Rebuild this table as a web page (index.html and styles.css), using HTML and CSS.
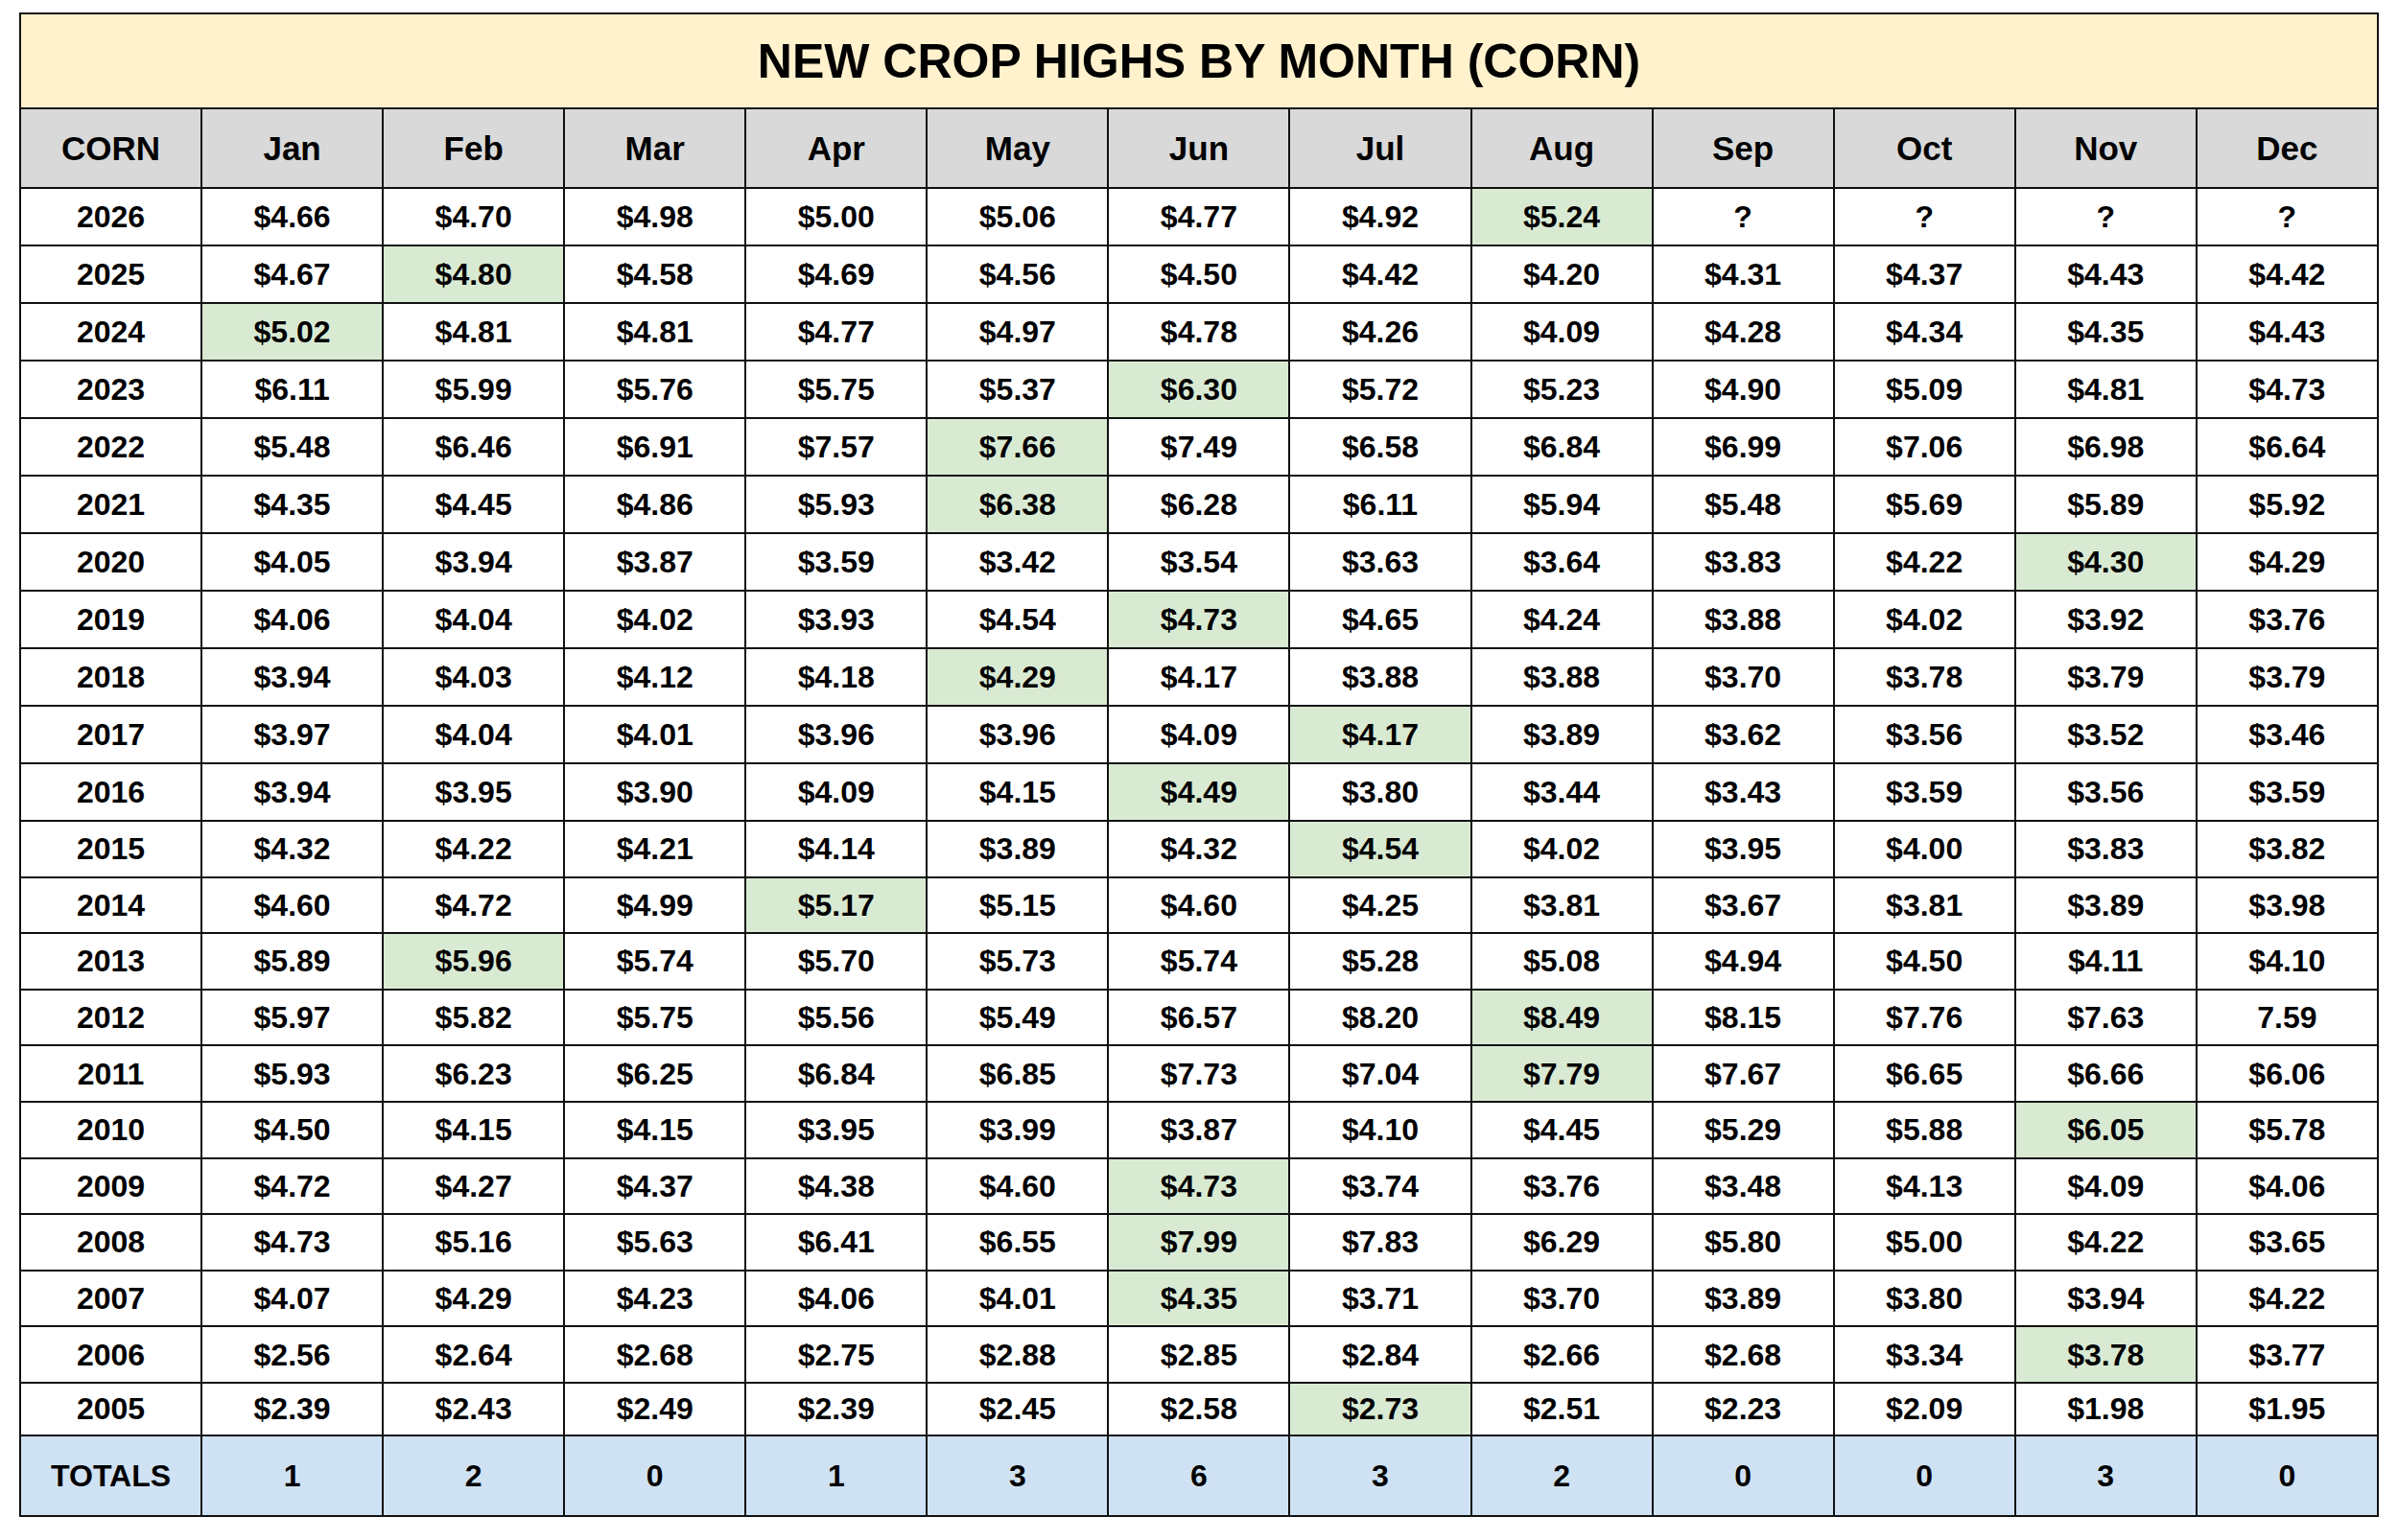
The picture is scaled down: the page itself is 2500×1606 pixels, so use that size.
FILE: index.html
```html
<!DOCTYPE html>
<html>
<head>
<meta charset="utf-8">
<title>New Crop Highs by Month (Corn)</title>
<link rel="stylesheet" href="styles.css">
</head>
<body>
<table class="sheet">
  <tr class="title-row"><td colspan="13" class="title">NEW CROP HIGHS BY MONTH (CORN)</td></tr>
  <tr class="head-row">
    <td>CORN</td><td>Jan</td><td>Feb</td><td>Mar</td><td>Apr</td><td>May</td><td>Jun</td><td>Jul</td><td>Aug</td><td>Sep</td><td>Oct</td><td>Nov</td><td>Dec</td>
  </tr>
  <tr class="r"><td>2026</td><td>$4.66</td><td>$4.70</td><td>$4.98</td><td>$5.00</td><td>$5.06</td><td>$4.77</td><td>$4.92</td><td class="hi">$5.24</td><td>?</td><td>?</td><td>?</td><td>?</td></tr>
  <tr class="r"><td>2025</td><td>$4.67</td><td class="hi">$4.80</td><td>$4.58</td><td>$4.69</td><td>$4.56</td><td>$4.50</td><td>$4.42</td><td>$4.20</td><td>$4.31</td><td>$4.37</td><td>$4.43</td><td>$4.42</td></tr>
  <tr class="r"><td>2024</td><td class="hi">$5.02</td><td>$4.81</td><td>$4.81</td><td>$4.77</td><td>$4.97</td><td>$4.78</td><td>$4.26</td><td>$4.09</td><td>$4.28</td><td>$4.34</td><td>$4.35</td><td>$4.43</td></tr>
  <tr class="r"><td>2023</td><td>$6.11</td><td>$5.99</td><td>$5.76</td><td>$5.75</td><td>$5.37</td><td class="hi">$6.30</td><td>$5.72</td><td>$5.23</td><td>$4.90</td><td>$5.09</td><td>$4.81</td><td>$4.73</td></tr>
  <tr class="r"><td>2022</td><td>$5.48</td><td>$6.46</td><td>$6.91</td><td>$7.57</td><td class="hi">$7.66</td><td>$7.49</td><td>$6.58</td><td>$6.84</td><td>$6.99</td><td>$7.06</td><td>$6.98</td><td>$6.64</td></tr>
  <tr class="r"><td>2021</td><td>$4.35</td><td>$4.45</td><td>$4.86</td><td>$5.93</td><td class="hi">$6.38</td><td>$6.28</td><td>$6.11</td><td>$5.94</td><td>$5.48</td><td>$5.69</td><td>$5.89</td><td>$5.92</td></tr>
  <tr class="r"><td>2020</td><td>$4.05</td><td>$3.94</td><td>$3.87</td><td>$3.59</td><td>$3.42</td><td>$3.54</td><td>$3.63</td><td>$3.64</td><td>$3.83</td><td>$4.22</td><td class="hi">$4.30</td><td>$4.29</td></tr>
  <tr class="r"><td>2019</td><td>$4.06</td><td>$4.04</td><td>$4.02</td><td>$3.93</td><td>$4.54</td><td class="hi">$4.73</td><td>$4.65</td><td>$4.24</td><td>$3.88</td><td>$4.02</td><td>$3.92</td><td>$3.76</td></tr>
  <tr class="r"><td>2018</td><td>$3.94</td><td>$4.03</td><td>$4.12</td><td>$4.18</td><td class="hi">$4.29</td><td>$4.17</td><td>$3.88</td><td>$3.88</td><td>$3.70</td><td>$3.78</td><td>$3.79</td><td>$3.79</td></tr>
  <tr class="r"><td>2017</td><td>$3.97</td><td>$4.04</td><td>$4.01</td><td>$3.96</td><td>$3.96</td><td>$4.09</td><td class="hi">$4.17</td><td>$3.89</td><td>$3.62</td><td>$3.56</td><td>$3.52</td><td>$3.46</td></tr>
  <tr class="r"><td>2016</td><td>$3.94</td><td>$3.95</td><td>$3.90</td><td>$4.09</td><td>$4.15</td><td class="hi">$4.49</td><td>$3.80</td><td>$3.44</td><td>$3.43</td><td>$3.59</td><td>$3.56</td><td>$3.59</td></tr>
  <tr class="r s"><td>2015</td><td>$4.32</td><td>$4.22</td><td>$4.21</td><td>$4.14</td><td>$3.89</td><td>$4.32</td><td class="hi">$4.54</td><td>$4.02</td><td>$3.95</td><td>$4.00</td><td>$3.83</td><td>$3.82</td></tr>
  <tr class="r s"><td>2014</td><td>$4.60</td><td>$4.72</td><td>$4.99</td><td class="hi">$5.17</td><td>$5.15</td><td>$4.60</td><td>$4.25</td><td>$3.81</td><td>$3.67</td><td>$3.81</td><td>$3.89</td><td>$3.98</td></tr>
  <tr class="r s"><td>2013</td><td>$5.89</td><td class="hi">$5.96</td><td>$5.74</td><td>$5.70</td><td>$5.73</td><td>$5.74</td><td>$5.28</td><td>$5.08</td><td>$4.94</td><td>$4.50</td><td>$4.11</td><td>$4.10</td></tr>
  <tr class="r s"><td>2012</td><td>$5.97</td><td>$5.82</td><td>$5.75</td><td>$5.56</td><td>$5.49</td><td>$6.57</td><td>$8.20</td><td class="hi">$8.49</td><td>$8.15</td><td>$7.76</td><td>$7.63</td><td>7.59</td></tr>
  <tr class="r s"><td>2011</td><td>$5.93</td><td>$6.23</td><td>$6.25</td><td>$6.84</td><td>$6.85</td><td>$7.73</td><td>$7.04</td><td class="hi">$7.79</td><td>$7.67</td><td>$6.65</td><td>$6.66</td><td>$6.06</td></tr>
  <tr class="r s"><td>2010</td><td>$4.50</td><td>$4.15</td><td>$4.15</td><td>$3.95</td><td>$3.99</td><td>$3.87</td><td>$4.10</td><td>$4.45</td><td>$5.29</td><td>$5.88</td><td class="hi">$6.05</td><td>$5.78</td></tr>
  <tr class="r s"><td>2009</td><td>$4.72</td><td>$4.27</td><td>$4.37</td><td>$4.38</td><td>$4.60</td><td class="hi">$4.73</td><td>$3.74</td><td>$3.76</td><td>$3.48</td><td>$4.13</td><td>$4.09</td><td>$4.06</td></tr>
  <tr class="r s"><td>2008</td><td>$4.73</td><td>$5.16</td><td>$5.63</td><td>$6.41</td><td>$6.55</td><td class="hi">$7.99</td><td>$7.83</td><td>$6.29</td><td>$5.80</td><td>$5.00</td><td>$4.22</td><td>$3.65</td></tr>
  <tr class="r s"><td>2007</td><td>$4.07</td><td>$4.29</td><td>$4.23</td><td>$4.06</td><td>$4.01</td><td class="hi">$4.35</td><td>$3.71</td><td>$3.70</td><td>$3.89</td><td>$3.80</td><td>$3.94</td><td>$4.22</td></tr>
  <tr class="r s"><td>2006</td><td>$2.56</td><td>$2.64</td><td>$2.68</td><td>$2.75</td><td>$2.88</td><td>$2.85</td><td>$2.84</td><td>$2.66</td><td>$2.68</td><td>$3.34</td><td class="hi">$3.78</td><td>$3.77</td></tr>
  <tr class="r last"><td>2005</td><td>$2.39</td><td>$2.43</td><td>$2.49</td><td>$2.39</td><td>$2.45</td><td>$2.58</td><td class="hi">$2.73</td><td>$2.51</td><td>$2.23</td><td>$2.09</td><td>$1.98</td><td>$1.95</td></tr>
  <tr class="totals"><td>TOTALS</td><td>1</td><td>2</td><td>0</td><td>1</td><td>3</td><td>6</td><td>3</td><td>2</td><td>0</td><td>0</td><td>3</td><td>0</td></tr>
</table>
</body>
</html>
```
FILE: styles.css
```css
html, body {
  margin: 0;
  padding: 0;
  background: #ffffff;
}

body {
  padding: 13px 0 0 20px;
  font-family: "Liberation Sans", Arial, sans-serif;
  color: #000000;
}

.sheet {
  border-collapse: collapse;
  table-layout: fixed;
  width: 2460px;
}

.sheet td {
  border: 2px solid #111111;
  padding: 0;
  text-align: center;
  vertical-align: middle;
  font-weight: bold;
  font-size: 32px;
  line-height: 1;
  overflow: hidden;
  white-space: nowrap;
}

.title-row td {
  height: 97px;
  background: #fff2cc;
  font-size: 50px;
}

.head-row td {
  height: 81px;
  background: #d9d9d9;
  font-size: 35px;
}

.r td {
  height: 58px;
  background: #ffffff;
}

.r.s td {
  height: 56.6px;
}

.r.last td {
  height: 53px;
}

.sheet .r td.hi {
  background: #d9ead3;
}

.totals td {
  height: 82px;
  background: #cfe2f3;
}
```
